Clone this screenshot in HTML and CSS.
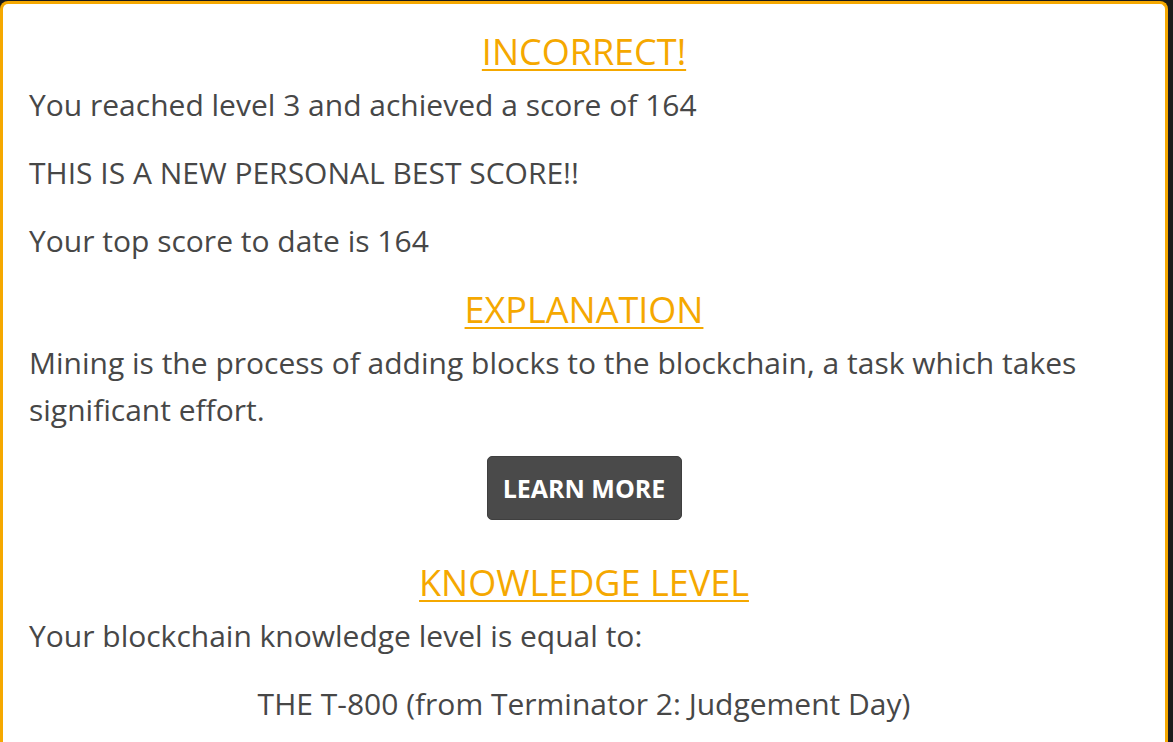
FILE: index.html
```html
<!DOCTYPE html>
<html lang="en">
<head>
<meta charset="utf-8">
<title>Result</title>
<link rel="stylesheet" href="styles.css">
</head>
<body>
<div class="card">
  <h2 class="heading">INCORRECT!</h2>
  <p class="text">You reached level 3 and achieved a score of 164</p>
  <p class="text">THIS IS A NEW PERSONAL BEST SCORE!!</p>
  <p class="text">Your top score to date is 164</p>
  <h2 class="heading">EXPLANATION</h2>
  <p class="text">Mining is the process of adding blocks to the blockchain, a task which takes significant effort.</p>
  <div class="actions"><a class="btn" href="#">LEARN MORE</a></div>
  <h2 class="heading">KNOWLEDGE LEVEL</h2>
  <p class="text">Your blockchain knowledge level is equal to:</p>
  <p class="text center">THE T-800 (from Terminator 2: Judgement Day)</p>
</div>
</body>
</html>
```
FILE: styles.css
```css
html, body {
  margin: 0;
  padding: 0;
  background: #1c1c1c;
}
body {
  padding: 1px 5px 0 0;
  font-family: "Open Sans", "Noto Sans", sans-serif;
  color: #474747;
}
.card {
  background: #fff;
  border: 3px solid #f5a800;
  border-bottom: 0;
  border-radius: 8px 8px 0 0;
  padding: 4px 26px 0;
  min-height: calc(100vh - 1px);
  box-sizing: border-box;
}
.heading {
  margin: 20px 0 4px;
  font-size: 36px;
  font-weight: 400;
  line-height: 50px;
  color: #f5a800;
  text-align: center;
  text-decoration: underline;
  text-decoration-thickness: 2px;
  text-underline-offset: 4px;
}
.heading:first-child { margin-top: 19px; }
.text {
  margin: 21px 0;
  font-size: 30px;
  line-height: 47px;
}
.text:last-child { margin-bottom: 0; }
.heading + .text { margin-top: 0; }
.center { text-align: center; }
.actions {
  display: flex;
  justify-content: center;
  margin: 23px 0 0;
}
.btn {
  display: inline-flex;
  align-items: center;
  justify-content: center;
  width: 195px;
  height: 64px;
  box-sizing: border-box;
  background: #4a4a4a;
  border: 1px solid #3f3f3f;
  border-radius: 5px;
  color: #fff;
  font-size: 25px;
  font-weight: 700;
  text-decoration: none;
}
.actions + .heading { margin-top: 38px; }
```
